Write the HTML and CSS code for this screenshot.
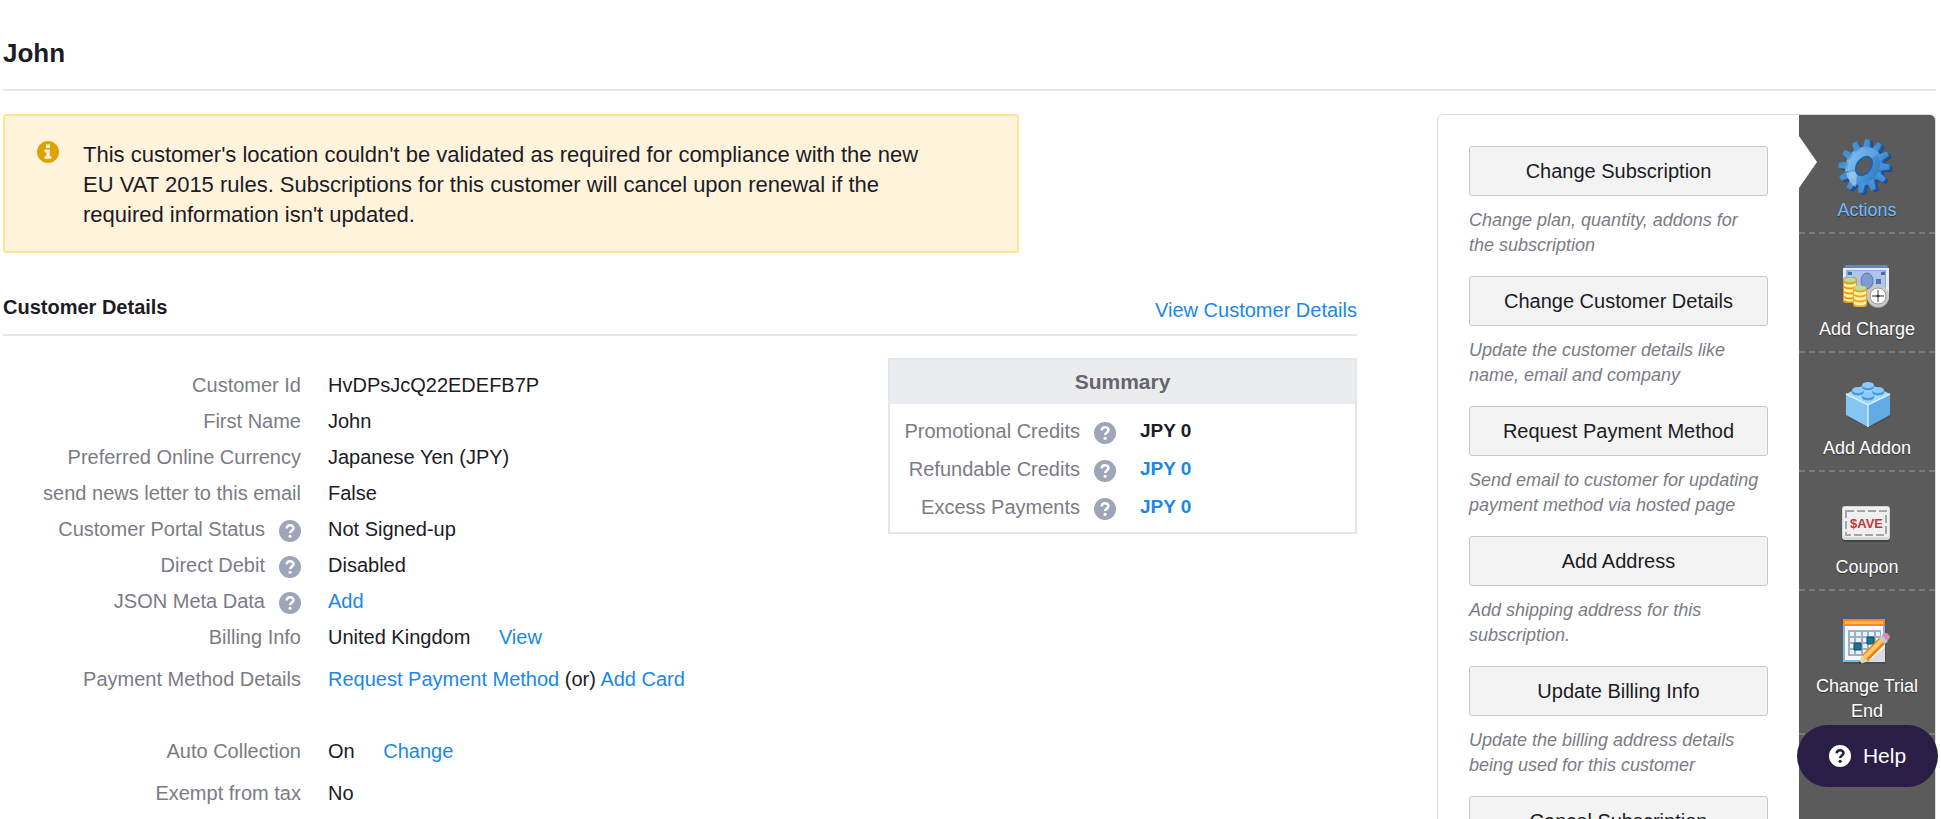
FILE: index.html
```html
<!DOCTYPE html>
<html lang="en">
<head>
    <meta charset="UTF-8">
    <title>John</title>
    <link rel="stylesheet" href="styles.css">
</head>
<body>
<svg class="defs" aria-hidden="true">
    <defs>
        <symbol id="question" viewBox="0 0 22 22">
            <circle cx="11" cy="11" r="11" fill="currentColor"/>
            <path class="mark" d="M7.6 8.4C7.9 6.2 9.2 5.2 11 5.2c2 0 3.5 1.100 3.500 2.900 0 2.600-3.300 2.300-3.300 5" fill="none" stroke-width="2.600"/>
            <circle class="dot" cx="11.100" cy="16.300" r="1.600"/>
        </symbol>
    </defs>
</svg>

<header class="page-header">
    <h1>John</h1>
</header>

<div class="layout">
    <main class="content">
        <div class="notice">
            <svg class="notice-icon" viewBox="0 0 22 22" aria-hidden="true">
                <circle cx="11" cy="11" r="11" fill="#dfa204"/>
                <path d="M9 3.500h4v3.500H9zM7.500 8.600h5.300v6.600h1.700v2.600h-7v-2.600h1.800v-4H7.500z" fill="#fff3dc"/>
            </svg>
            <p>This customer's location couldn't be validated as required for compliance with the new EU VAT 2015 rules. Subscriptions for this customer will cancel upon renewal if the required information isn't updated.</p>
        </div>

        <div class="section-header">
            <h2>Customer Details</h2>
            <a href="#">View Customer Details</a>
        </div>

        <div class="details">
            <dl class="fields">
                <div class="field"><dt>Customer Id</dt><dd>HvDPsJcQ22EDEFB7P</dd></div>
                <div class="field"><dt>First Name</dt><dd>John</dd></div>
                <div class="field"><dt>Preferred Online Currency</dt><dd>Japanese Yen (JPY)</dd></div>
                <div class="field"><dt>send news letter to this email</dt><dd>False</dd></div>
                <div class="field"><dt>Customer Portal Status <svg class="hint"><use href="#question"/></svg></dt><dd>Not Signed-up</dd></div>
                <div class="field"><dt>Direct Debit <svg class="hint"><use href="#question"/></svg></dt><dd>Disabled</dd></div>
                <div class="field"><dt>JSON Meta Data <svg class="hint"><use href="#question"/></svg></dt><dd><a href="#">Add</a></dd></div>
                <div class="field"><dt>Billing Info</dt><dd>United Kingdom <a class="edit" href="#">View</a></dd></div>
                <div class="field spaced"><dt>Payment Method Details</dt><dd><a href="#">Request Payment Method</a> (or) <a href="#">Add Card</a></dd></div>
                <div class="field group"><dt>Auto Collection</dt><dd>On <a class="edit" href="#">Change</a></dd></div>
                <div class="field spaced"><dt>Exempt from tax</dt><dd>No</dd></div>
            </dl>

            <section class="summary">
                <h3>Summary</h3>
                <dl>
                    <div class="field"><dt>Promotional Credits <svg class="hint"><use href="#question"/></svg></dt><dd>JPY 0</dd></div>
                    <div class="field"><dt>Refundable Credits <svg class="hint"><use href="#question"/></svg></dt><dd><a href="#">JPY 0</a></dd></div>
                    <div class="field"><dt>Excess Payments <svg class="hint"><use href="#question"/></svg></dt><dd><a href="#">JPY 0</a></dd></div>
                </dl>
            </section>
        </div>
    </main>

    <aside class="panel">
        <div class="actions">
            <button type="button">Change Subscription</button>
            <p>Change plan, quantity, addons for the subscription</p>
            <button type="button">Change Customer Details</button>
            <p>Update the customer details like name, email and company</p>
            <button type="button">Request Payment Method</button>
            <p>Send email to customer for updating payment method via hosted page</p>
            <button type="button">Add Address</button>
            <p>Add shipping address for this subscription.</p>
            <button type="button">Update Billing Info</button>
            <p>Update the billing address details being used for this customer</p>
            <button type="button">Cancel Subscription</button>
        </div>

        <nav class="tabs">
            <a class="tab active" href="#">
                <svg viewBox="0 0 62 62" aria-hidden="true">
                    <defs>
                        <linearGradient id="gearFace" gradientUnits="userSpaceOnUse" x1="-26" y1="8" x2="26" y2="-4">
                            <stop offset="0" stop-color="#7cc0f0"/>
                            <stop offset="0.450" stop-color="#4f9bdc"/>
                            <stop offset="1" stop-color="#2c70bd"/>
                        </linearGradient>
                        <path id="tooth" d="M-4-17L-2.500-27.500h5L4-17z"/>
                        <g id="gear">
                            <path fill-rule="evenodd" d="M0-20A20 20 0 1 1 0 20A20 20 0 1 1 0-20zM0-10A7.500 10 0 1 0 0 10A7.500 10 0 1 0 0-10z"/>
                            <use href="#tooth"/>
                            <use href="#tooth" transform="rotate(30)"/>
                            <use href="#tooth" transform="rotate(60)"/>
                            <use href="#tooth" transform="rotate(90)"/>
                            <use href="#tooth" transform="rotate(120)"/>
                            <use href="#tooth" transform="rotate(150)"/>
                            <use href="#tooth" transform="rotate(180)"/>
                            <use href="#tooth" transform="rotate(210)"/>
                            <use href="#tooth" transform="rotate(240)"/>
                            <use href="#tooth" transform="rotate(270)"/>
                            <use href="#tooth" transform="rotate(300)"/>
                            <use href="#tooth" transform="rotate(330)"/>
                        </g>
                    </defs>
                    <use href="#gear" fill="#1b4a8c" transform="translate(31 32) rotate(35) scale(0.900 1)"/>
                    <use href="#gear" fill="#2259a3" transform="translate(30 31) rotate(35) scale(0.900 1)"/>
                    <use href="#gear" fill="url(#gearFace)" transform="translate(28 30) rotate(35) scale(0.900 1)"/>
                    <path d="M10 37l11-2-1 16q-7-3-10-14z" fill="#cfe9fc" opacity="0.500"/>
                    <path d="M29 11q9 0 14 6l-10 7q-4-4-9 0-5 4-4 8L9 36Q10 15 29 11z" fill="#9fd2f5" opacity="0.300"/>
                    <ellipse cx="28" cy="30" rx="7" ry="10" transform="rotate(35 28 30)" fill="#5b5b5b" stroke="#2360ab" stroke-width="2"/>
                </svg>
                <span>Actions</span>
            </a>
            <a class="tab" href="#">
                <svg viewBox="0 0 62 62" aria-hidden="true">
                    <path d="M10 10h41l2 4H7z" fill="#6485bd"/>
                    <path d="M7 13h46v30H7z" fill="#e3ebf7"/>
                    <path d="M10 15h40v25H10z" fill="#8fa9d8"/>
                    <path d="M14 16h32v4h3v17h-3v3H14v-3h-3V20h3z" fill="#b1c5e8"/>
                    <ellipse cx="31" cy="26" rx="6" ry="8" fill="#7f9bcf" stroke="#5878b3" stroke-width="1"/>
                    <path d="M40 24h5v5h-5z" fill="#5473ae"/>
                    <path d="M12 17h4v3h-4zM45 17h4v3h-4z" fill="#486aa8"/>
                    <rect x="7" y="22" width="14" height="26" rx="3" fill="#e69a24"/>
                    <path d="M8 28q6 3 12 0v3q-6 3-12 0zM8 33q6 3 12 0v3q-6 3-12 0zM8 38q6 3 12 0v3q-6 3-12 0zM8 43q6 3 12 0v2q-6 3-12 0z" fill="#fff29a"/>
                    <ellipse cx="14" cy="25" rx="6" ry="2.500" fill="#b5df8c"/>
                    <rect x="17" y="31" width="14" height="21" rx="3" fill="#eda629"/>
                    <path d="M18 36q6 3 12 0v3q-6 3-12 0zM18 41q6 3 12 0v3q-6 3-12 0zM18 46q6 3 12 0v3q-6 3-12 0z" fill="#fff5a4"/>
                    <ellipse cx="24" cy="33" rx="6" ry="2.500" fill="#b9df8c"/>
                    <circle cx="42" cy="42" r="11" fill="#999"/>
                    <circle cx="42" cy="41" r="11" fill="#c9c9c9"/>
                    <circle cx="42" cy="41" r="8" fill="#fff" stroke="#999" stroke-width="1"/>
                    <path d="M42 35v12M36 41h12" stroke="#777" stroke-width="1.500" stroke-dasharray="5 2"/>
                    <path d="M40.500 41h3" stroke="#333" stroke-width="2"/>
                </svg>
                <span>Add Charge</span>
            </a>
            <a class="tab" href="#">
                <svg viewBox="0 0 62 62" aria-hidden="true">
                    <path d="M11 21l22 10 21-10v22L33 54 11 43z" fill="#444" opacity="0.600"/>
                    <path d="M32 9l22 11-22 11L10 20z" fill="#a5d8fb"/>
                    <path d="M10 20l22 11v22L10 41z" fill="#86c4f3"/>
                    <path d="M54 20L32 31v22l22-12z" fill="#62abe5"/>
                    <path d="M10 20l22 11 22-11M32 31v22" fill="none" stroke="#d2efff" stroke-width="1.500"/>
                    <g fill="#4b9bdc">
                        <ellipse cx="32" cy="13" rx="6.500" ry="3.500"/>
                        <ellipse cx="22" cy="18" rx="6.500" ry="3.500"/>
                        <ellipse cx="42" cy="18" rx="6.500" ry="3.500"/>
                        <ellipse cx="32" cy="23" rx="6.500" ry="3.500"/>
                    </g>
                    <g fill="#8ccaf7">
                        <ellipse cx="32" cy="11" rx="6" ry="3"/>
                        <ellipse cx="22" cy="16" rx="6" ry="3"/>
                        <ellipse cx="42" cy="16" rx="6" ry="3"/>
                        <ellipse cx="32" cy="21" rx="6" ry="3"/>
                    </g>
                </svg>
                <span>Add Addon</span>
            </a>
            <a class="tab" href="#">
                <svg viewBox="0 0 62 62" aria-hidden="true">
                    <rect x="6" y="15" width="48" height="34" rx="3" fill="#444"/>
                    <rect x="6" y="13" width="48" height="34" rx="3" fill="#d5d5d5"/>
                    <rect x="7" y="14" width="46" height="30" rx="2" fill="#f0f0f0"/>
                    <rect x="10" y="18" width="40" height="24" fill="none" stroke="#a5a5a5" stroke-width="2" stroke-dasharray="8 3"/>
                    <text x="30.500" y="35" text-anchor="middle" class="save">$AVE</text>
                </svg>
                <span>Coupon</span>
            </a>
            <a class="tab" href="#">
                <svg viewBox="0 0 62 62" aria-hidden="true">
                    <path d="M8 15h42v37H8z" fill="#444" opacity="0.500"/>
                    <path d="M7 12h42v38H7z" fill="#75bde5"/>
                    <path d="M9 14h38v34H9z" fill="#f5fbff"/>
                    <path d="M7 8q0-1 1-1h40q1 0 1 1v6H7z" fill="#f38a1c"/>
                    <path d="M9 9h38v3H9z" fill="#ffb84f"/>
                    <path d="M12 18h33v26H12z" fill="#a6adb8"/>
                    <path d="M14 20h4v4h-4zM20 20h5v4h-5zM27 20h4v4h-4zM33 20h5v4h-5zM40 20h4v4h-4zM14 26h4v4h-4zM20 26h5v4h-5zM27 26h4v4h-4zM40 26h4v4h-4zM14 32h4v4h-4zM27 32h4v4h-4zM33 32h5v4h-5zM14 38h4v4h-4zM20 38h5v4h-5zM27 38h4v4h-4z" fill="#e1f5ff"/>
                    <path d="M31 25h7v7h-7zM18 31h7v7h-7z" fill="#16798a"/>
                    <path d="M31 25h7v7h-7zM18 31h7v7h-7z" fill="none" stroke="#17477c"/>
                    <path d="M49 34v16H32z" fill="#d8dce2"/>
                    <path d="M34 48l15-13v-3L30 49z" fill="#fff"/>
                    <path d="M22 53l4-10 6 6z" fill="#f1d3a1"/>
                    <path d="M22 53l1.500-4 2.500 2.500z" fill="#333"/>
                    <path d="M26 43l18-18 6 6-18 18z" fill="#e8811a"/>
                    <path d="M27 44l18-18 3 3-18 18z" fill="#ffc968"/>
                    <path d="M43 26l3-3 6 6-3 3z" fill="#c4c9cf"/>
                    <path d="M46 23l2-2q3-1 5 2 2 2 0 4l-2 2z" fill="#d58bb4"/>
                </svg>
                <span>Change Trial End</span>
            </a>
        </nav>
    </aside>
</div>

<button class="help" type="button">
    <svg><use href="#question"/></svg>
    Help
</button>
</body>
</html>
```

FILE: styles.css
```css
* {
    box-sizing: border-box;
}

body {
    margin: 0;
    padding: 37px 5px 0 3px;
    height: 100vh;
    overflow: hidden;
    background: #fff;
    color: #1c1b26;
    font: 20px/36px "Liberation Sans", Arial, sans-serif;
}

h1, h2, h3, p, dl, dd {
    margin: 0;
}

a {
    color: #1a88ea;
    text-decoration: none;
}

button {
    font-family: inherit;
    cursor: pointer;
}

.defs {
    display: none;
}

.page-header {
    padding-bottom: 20px;
    border-bottom: 2px solid #e8e8ea;
    margin-bottom: 23px;
}

h1 {
    font-size: 26px;
    line-height: 32px;
}

.layout {
    display: flex;
    align-items: flex-start;
    gap: 80px;
}

.content {
    flex: 1;
}

/* warning box */
.notice {
    display: flex;
    align-items: flex-start;
    gap: 24px;
    width: 75%;
    padding: 24px 90px 21px 32px;
    border: 2px solid #ffe595;
    border-radius: 3px;
    background: #fff3dc;
    font-size: 22px;
    line-height: 30px;
}

.notice-icon {
    flex: none;
    width: 22px;
    height: 22px;
    margin-top: 1px;
}

.section-header {
    display: flex;
    justify-content: space-between;
    margin-top: 42px;
    padding-bottom: 9px;
    border-bottom: 2px solid #e1e6ef;
    line-height: 30px;
}

h2 {
    font-size: 20px;
    line-height: 24px;
}

/* customer fields */
.details {
    display: flex;
    justify-content: space-between;
    align-items: flex-start;
    padding-top: 22px;
}

.fields {
    padding-top: 9px;
}

.field {
    display: flex;
    gap: 27px;
}

.field dt {
    display: flex;
    justify-content: flex-end;
    align-items: center;
    gap: 14px;
    width: 298px;
    color: #7c7b85;
}

.hint {
    flex: none;
    width: 22px;
    height: 22px;
    margin-top: 3px;
    color: #9fa5b8;
}

.mark {
    stroke: var(--mark, #fff);
}

.dot {
    fill: var(--mark, #fff);
}

.edit {
    margin-left: 23px;
}

.spaced {
    margin-top: 6px;
}

.group {
    margin-top: 36px;
}

.summary {
    width: 469px;
    border: 2px solid #e1e6ef;
}

.summary h3 {
    background: #ebecf0;
    color: #65656a;
    font-size: 21px;
    line-height: 44px;
    text-align: center;
}

.summary dl {
    padding: 8px 0 6px;
}

.summary .field {
    gap: 24px;
    line-height: 38px;
}

.summary dt {
    width: 226px;
}

.summary dd {
    font-size: 19px;
    font-weight: bold;
}

/* right panel */
.panel {
    display: flex;
    width: 499px;
    border: 1px solid #d8ddec;
    border-radius: 6px;
    overflow: hidden;
}

.actions {
    flex: 1;
    padding: 31px 31px 24px;
}

.actions button {
    display: block;
    width: 100%;
    height: 50px;
    border: 1px solid #c8c8c8;
    border-radius: 3px;
    background: #f3f3f3;
    color: #1c1b26;
    font-size: 20px;
}

.actions p {
    margin: 12px 0 18px;
    padding-right: 4px;
    color: #7c7b85;
    font-size: 18px;
    font-style: italic;
    line-height: 25px;
}

.tabs {
    width: 136px;
    background: #5b5b5b;
}

.tab {
    position: relative;
    display: block;
    padding: 21px 10px 9px;
    border-bottom: 2px dashed #7b7b7b;
    color: #fff;
    font-size: 18px;
    line-height: 25px;
    text-align: center;
    text-shadow: 0 1px 1px #333;
}

.tab svg {
    display: block;
    width: 62px;
    height: 62px;
    margin: 0 auto;
}

.tab span {
    display: block;
}

.active {
    color: #6cbcff;
}

.active::before {
    content: "";
    position: absolute;
    left: 0;
    top: 21px;
    border: 26px solid transparent;
    border-left: 18px solid #fff;
    border-right: 0;
}

.save {
    fill: #c0383e;
    font: bold 13px "Liberation Sans", Arial, sans-serif;
    text-shadow: none;
}

.help {
    --mark: #2b1e46;
    position: fixed;
    right: 3px;
    bottom: 32px;
    display: flex;
    align-items: center;
    justify-content: center;
    gap: 12px;
    width: 141px;
    height: 62px;
    border: 0;
    border-radius: 31px;
    background: #2b1e46;
    color: #fff;
    font-size: 21px;
}

.help svg {
    width: 22px;
    height: 22px;
}
```
